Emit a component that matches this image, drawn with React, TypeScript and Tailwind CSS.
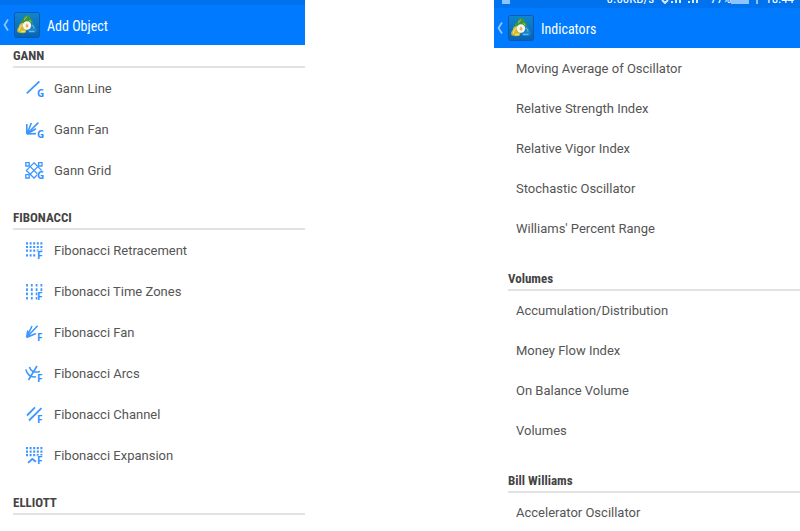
import type { ReactNode } from "react";

const GannLineIcon = () => <path d="M1.8 14.4 14.4 2.3" strokeWidth="1.8" />;

const GannFanIcon = () => (
  <path d="M1.8 14V4M1.8 14 6.4 3M1.8 14 13.4 2.6M1.8 14 11 8.8M1.8 14 11 13.6" strokeWidth="1.6" />
);

const GannGridIcon = () => (
  <g strokeWidth="1.3">
    <path d="M.8 1.6h3.4V5H.8zM13.6 1.6H17V5h-3.4zM.8 13.6h3.4V17H.8z" />
    <path d="M9 1.8 16.6 9.4 9 17 1.4 9.4z" />
    <path d="M5.2 5.6 12.8 13.2M12.8 5.6 5.2 13.2" />
  </g>
);

const RetracementIcon = () => (
  <path d="M1 2.4h16.6M1 6h16.6M1 9.6h16.6M1 14.4h9.4" strokeWidth="2.2" strokeDasharray="2 1.6" />
);

const TimeZonesIcon = () => (
  <path d="M2 2v16M6.8 2v16M11.6 2v16M16.4 2v8" strokeWidth="1.8" strokeDasharray="2.6 1.7" />
);

const FibFanIcon = () => (
  <path d="M1.6 14.5 2.8 7.5M1.6 14.5 7 3M1.6 14.5 12.6 2.8M1.6 14.5 11 10.5" strokeWidth="1.6" />
);

const ArcsIcon = () => (
  <g strokeWidth="1.6">
    <path d="M3.5 16 12 2" />
    <path d="M4.5 3C5.5 7.5 9 9 15 7.5M.8 5.5C2.5 11 6.5 13.5 11 12.8" />
  </g>
);

const ChannelIcon = () => <path d="M2 10.5 10 2.3M4 15.5 16.5 3.2" strokeWidth="1.8" />;

const ExpansionIcon = () => (
  <g>
    <path d="M1 2.2h16.6M1 5.7h16.6M1 9.2h16.6" strokeWidth="2.2" strokeDasharray="2 1.6" />
    <path d="M3 16.8 7.3 13l3.7 2.8" strokeWidth="1.8" />
  </g>
);

const ObjectIcon = ({ letter, children }: { letter: string; children: ReactNode }) => (
  <svg viewBox="0 0 20 20" className="h-5 w-5 shrink-0" fill="none" stroke="#3d97ff" aria-hidden="true">
    {children}
    <text
      x="12"
      y="18"
      fill="#2f8fff"
      stroke="#fff"
      strokeWidth="1"
      paintOrder="stroke"
      className="font-['Open_Sans',sans-serif] text-[10px] font-bold"
    >
      {letter}
    </text>
  </svg>
);

const objectGroups = [
  {
    title: "GANN",
    letter: "G",
    items: [
      { name: "Gann Line", icon: <GannLineIcon /> },
      { name: "Gann Fan", icon: <GannFanIcon /> },
      { name: "Gann Grid", icon: <GannGridIcon /> },
    ],
  },
  {
    title: "FIBONACCI",
    letter: "F",
    items: [
      { name: "Fibonacci Retracement", icon: <RetracementIcon /> },
      { name: "Fibonacci Time Zones", icon: <TimeZonesIcon /> },
      { name: "Fibonacci Fan", icon: <FibFanIcon /> },
      { name: "Fibonacci Arcs", icon: <ArcsIcon /> },
      { name: "Fibonacci Channel", icon: <ChannelIcon /> },
      { name: "Fibonacci Expansion", icon: <ExpansionIcon /> },
    ],
  },
  { title: "ELLIOTT", letter: "E", items: [] },
];

const oscillators = [
  "Moving Average of Oscillator",
  "Relative Strength Index",
  "Relative Vigor Index",
  "Stochastic Oscillator",
  "Williams' Percent Range",
];

const indicatorGroups = [
  {
    title: "Volumes",
    items: ["Accumulation/Distribution", "Money Flow Index", "On Balance Volume", "Volumes"],
  },
  { title: "Bill Williams", items: ["Accelerator Oscillator"] },
];

const AppLogo = () => (
  <svg viewBox="0 0 26 26" className="h-[26px] w-[26px]" aria-hidden="true">
    <defs>
      <linearGradient id="logoBg" x1="0" y1="0" x2="0" y2="1">
        <stop offset="0" stopColor="#0f86cf" />
        <stop offset="1" stopColor="#0862b4" />
      </linearGradient>
    </defs>
    <rect x="0.5" y="0.5" width="25" height="25" rx="2" fill="url(#logoBg)" stroke="#0a58b4" />
    {/* green, yellow and blue leaves round a white hub */}
    <path d="M7 12c-.8-2.5.8-4.5 2.5-5 .2-2.5 1.7-4 3.500-4s3.300 1.500 3.500 4c1.700.5 3.300 2.500 2.500 5l-3 2h-6z" fill="#3f9440" />
    <path d="M10.5 8c.5-2 1.300-3 2.500-3M15.500 8l1.500 2" fill="none" stroke="#a5cf5a" />
    <path d="M3.5 20c-.8-2 0-4 1.300-5 0-2.500 1.700-4 4.200-4l4 6-1.500 3.800c-3 .7-6 .4-8-.8z" fill="#cdbb32" />
    <path d="M5.5 18.500c0-2.500 1-4.500 3-5.500M7 19.300h4" fill="none" stroke="#f4ee98" />
    <path d="M17 11c2.500 0 4.200 1.500 4.200 4 1.300 1 2.100 3 1.300 5-2 1.200-5 1.500-8 .8L13 17z" fill="#1b83cc" />
    <path d="M18 13c1.500.8 2 2 1.800 3.500M15 19.300h5.500" fill="none" stroke="#7cc8ea" />
    <circle cx="13" cy="13.5" r="4.2" fill="#f6f5ee" />
    <path d="M13 11.2 14.6 14 13 16l-1.6-2z" fill="#f0a868" />
  </svg>
);

const TitleBar = ({ title }: { title: string }) => (
  <header className="flex h-10 items-center bg-[#007aff] text-white">
    <button type="button" aria-label="Back" className="flex h-full w-3.5 items-center pl-[3px]">
      <svg viewBox="0 0 6 12" className="h-3 w-1.5" fill="none" stroke="#8cc4ff" strokeWidth="1.8">
        <path d="M5 .5 1.5 6 5 11.5" />
      </svg>
    </button>
    <AppLogo />
    <h1 className="ml-[7px] pt-0.5 font-['Roboto_Condensed','Roboto',sans-serif] text-sm">{title}</h1>
  </header>
);

const GroupTitle = ({ children }: { children: ReactNode }) => (
  <h2 className="border-b-2 border-[#e2e2e2] pt-px pb-px font-['Roboto_Condensed','Roboto',sans-serif] text-[13px] leading-[18px] font-bold text-[#444]">
    {children}
  </h2>
);

const StatusBar = () => (
  <div className="flex h-2 items-end overflow-hidden bg-[#0072ee] pr-1.5 pl-2 pb-1 font-['Roboto_Condensed','Roboto',sans-serif] text-[13px] leading-[10px] text-white">
    <span className="mr-auto h-1 w-2 bg-[#8cc4ff]" />
    <span>0.00KB/s</span>
    <svg viewBox="0 0 48 4" className="mx-1 h-1 w-12 shrink-0" fill="none" stroke="#d6eaff" strokeWidth="2" aria-hidden="true">
      <path d="m4 0 3 3 3-3M14 1v2M18 0v3M22 0v3M31 1v2M35 0v3M39 0v3" />
    </svg>
    <span>77%</span>
    <span className="h-1 w-[18px] bg-[#8cc4ff]" />
    <span className="mx-[7px] h-1 w-0.5 bg-[#8cc4ff]" />
    <span>18:44</span>
  </div>
);

const App = () => {
  return (
    <main className="grid h-screen grid-cols-[305fr_189fr_306fr] overflow-hidden bg-white font-['Roboto',sans-serif] text-[13px] text-[#555]">
      <section className="min-w-0">
        <div className="h-[5px] bg-[#0072ee]" />
        <TitleBar title="Add Object" />
        <div className="pl-[13px]">
          {objectGroups.map((group, index) => (
            <div key={group.title} className={index === 0 ? "pt-px" : "pt-[17px]"}>
              <GroupTitle>{group.title}</GroupTitle>
              <ul>
                {group.items.map((item) => (
                  <li key={item.name}>
                    <button type="button" className="flex h-[41px] w-full items-center gap-[9px] pl-3 text-left">
                      <ObjectIcon letter={group.letter}>{item.icon}</ObjectIcon>
                      {item.name}
                    </button>
                  </li>
                ))}
              </ul>
            </div>
          ))}
        </div>
      </section>

      <section className="col-start-3 min-w-0">
        <StatusBar />
        <TitleBar title="Indicators" />
        <div className="pt-px pl-[14px]">
          <ul>
            {oscillators.map((name) => (
              <li key={name}>
                <button type="button" className="h-10 w-full pl-2 text-left">
                  {name}
                </button>
              </li>
            ))}
          </ul>
          {indicatorGroups.map((group) => (
            <div key={group.title} className="pt-5">
              <GroupTitle>{group.title}</GroupTitle>
              <ul>
                {group.items.map((name) => (
                  <li key={name}>
                    <button type="button" className="h-10 w-full pl-2 text-left">
                      {name}
                    </button>
                  </li>
                ))}
              </ul>
            </div>
          ))}
        </div>
      </section>
    </main>
  );
};

export default App;
